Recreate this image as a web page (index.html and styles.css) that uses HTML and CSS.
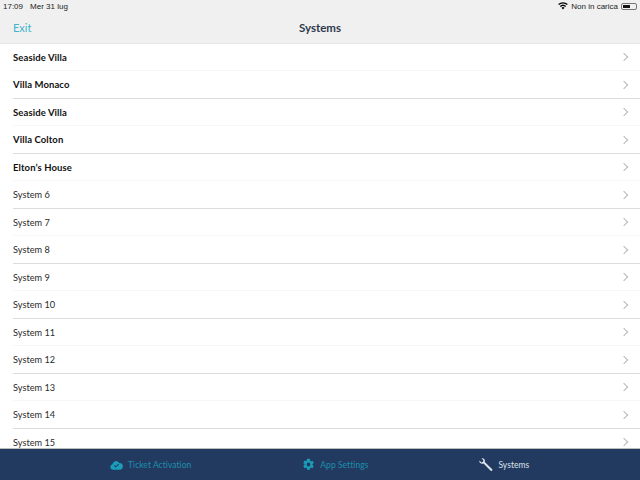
FILE: index.html
```html
<!DOCTYPE html>
<html lang="en">
<head>
  <meta charset="UTF-8" />
  <title>Systems</title>
  <link rel="stylesheet" href="styles.css">
</head>
<body>
  <div class="app">
    <header class="top">
      <div class="status">
        <span>17:09</span>
        <span class="status-date">Mer 31 lug</span>
        <span class="status-right">
          <svg class="wifi" viewBox="0 0 12 9" width="10" height="8"><path d="M6 8.600 4.200 6.600a2.600 2.600 0 0 1 3.600 0zM3.300 5.600 2.200 4.400a5.500 5.500 0 0 1 7.600 0L8.700 5.600a4 4 0 0 0-5.400 0zM1.300 3.400 0.200 2.200a8.400 8.400 0 0 1 11.600 0l-1.100 1.200a6.800 6.800 0 0 0-9.400 0z"/></svg>
          <span>Non in carica</span>
          <span class="battery"><span class="battery-level"></span></span>
        </span>
      </div>
      <nav class="navbar">
        <a class="exit">Exit</a>
        <h1>Systems</h1>
      </nav>
    </header>

    <ul class="list">
      <li class="named"><span>Seaside Villa</span><i class="chev"></i></li>
      <li class="named"><span>Villa Monaco</span><i class="chev"></i></li>
      <li class="named"><span>Seaside Villa</span><i class="chev"></i></li>
      <li class="named"><span>Villa Colton</span><i class="chev"></i></li>
      <li class="named"><span>Elton’s House</span><i class="chev"></i></li>
      <li><span>System 6</span><i class="chev"></i></li>
      <li><span>System 7</span><i class="chev"></i></li>
      <li><span>System 8</span><i class="chev"></i></li>
      <li><span>System 9</span><i class="chev"></i></li>
      <li><span>System 10</span><i class="chev"></i></li>
      <li><span>System 11</span><i class="chev"></i></li>
      <li><span>System 12</span><i class="chev"></i></li>
      <li><span>System 13</span><i class="chev"></i></li>
      <li><span>System 14</span><i class="chev"></i></li>
      <li><span>System 15</span><i class="chev"></i></li>
    </ul>

    <footer class="tabs">
      <div class="tab tab-ticket">
        <svg viewBox="0 0 14 10" width="13" height="10"><path fill-rule="evenodd" d="M3.200 10A3 3 0 0 1 2.600 4.100 3.900 3.900 0 0 1 9.900 2.900 3.600 3.600 0 0 1 11 10zM6.200 7.800 9.800 4.500 9 3.700 6.200 6.300 5 5.100 4.200 5.900z"/></svg>
        <span>Ticket Activation</span>
      </div>
      <div class="tab tab-settings">
        <svg viewBox="0 0 24 24" width="13" height="13"><path d="M19.400 13a7.600 7.600 0 0 0 0-2l2.300-1.800-2.300-4-2.700 1.100a7.500 7.500 0 0 0-1.700-1L14.500 1.500h-5L9.100 4.300a7.500 7.500 0 0 0-1.700 1L4.600 5.200l-2.300 4L4.600 11a7.600 7.600 0 0 0 0 2l-2.300 1.800 2.300 4 2.800-1.100a7.500 7.500 0 0 0 1.700 1l.4 2.800h5l.4-2.800a7.500 7.500 0 0 0 1.700-1l2.700 1.100 2.300-4zM12 15.500a3.500 3.500 0 1 1 0-7 3.500 3.500 0 0 1 0 7z"/></svg>
        <span>App Settings</span>
      </div>
      <div class="tab tab-systems active">
        <svg viewBox="0 0 14 14" width="14" height="14"><path d="M0.400 2.600 2.400 4.400 4 3.800 4.300 2.200 2.500 0.300C4.300-0.300 6 1 5.900 3L5.800 3.900 13.200 11.200C14 12 12.600 13.700 11.700 12.800L4.500 5.400C2.300 6.200-0.100 4.800 0.400 2.600Z"/></svg>
        <span>Systems</span>
      </div>
    </footer>
  </div>
</body>
</html>
```

FILE: styles.css
```css
html, body {
  margin: 0;
  height: 100%;
}

body {
  font-family: "Lato", "Open Sans", sans-serif;
  color: #222;
  background: #fff;
}

.app {
  display: flex;
  flex-direction: column;
  width: 640px;
  height: 480px;
  overflow: hidden;
}

.top {
  flex: none;
  height: 43px;
  background: #f0f0f0;
  border-bottom: 1px solid #e6e6e6;
}

.status {
  display: flex;
  align-items: center;
  height: 12px;
  padding: 0 3px;
  font-family: "Liberation Sans", sans-serif;
  font-size: 8px;
  color: #222;
}

.status-date {
  margin-left: 7px;
}

.status-right {
  display: flex;
  align-items: center;
  margin-left: auto;
  gap: 3px;
}

.battery {
  display: block;
  padding: 1px;
  border: 1px solid #777;
  border-radius: 2px;
  width: 12px;
  height: 3px;
}

.battery-level {
  display: block;
  width: 7px;
  height: 3px;
  background: #111;
}

.navbar {
  position: relative;
  display: flex;
  align-items: center;
  justify-content: center;
  height: 31px;
}

.navbar h1 {
  margin: 0;
  font-size: 11.500px;
  font-weight: 700;
  color: #2e3a4c;
}

.exit {
  position: absolute;
  left: 13px;
  font-size: 11px;
  color: #3fb4cc;
}

.list {
  flex: 1;
  min-height: 0;
  margin: 0;
  padding: 0;
  list-style: none;
  overflow: hidden;
}

.list li {
  display: flex;
  align-items: center;
  justify-content: space-between;
  height: 26.500px;
  margin-left: 13px;
  padding-right: 13px;
  border-bottom: 1px solid #f6f6f6;
  font-size: 9.200px;
  color: #2a2a2a;
}

.list li:first-child {
  height: 26.300px;
}

.list li:nth-child(even) {
  border-bottom-color: #dcdcdc;
}

.list li.named {
  font-size: 9.500px;
  letter-spacing: 0.1px;
  font-weight: 700;
  color: #111;
}

.chev {
  display: block;
  width: 5px;
  height: 5px;
  border-top: 1px solid #b8b8b8;
  border-right: 1px solid #b8b8b8;
  transform: rotate(45deg);
}

.tabs {
  flex: none;
  display: flex;
  height: 31px;
  background: #233a60;
  border-top: 1px solid #bcbcbc;
}

.tab {
  display: flex;
  align-items: center;
  gap: 5px;
  font-size: 8.500px;
  letter-spacing: 0.05px;
  color: #1a8fae;
  fill: #1a9dbb;
}

.tab-ticket {
  margin-left: 110px;
}

.tab-settings {
  margin-left: 111px;
}

.tab-systems {
  margin-left: 111px;
}

.tab.active {
  color: #dbe3ea;
  fill: #dbe3ea;
}
```
